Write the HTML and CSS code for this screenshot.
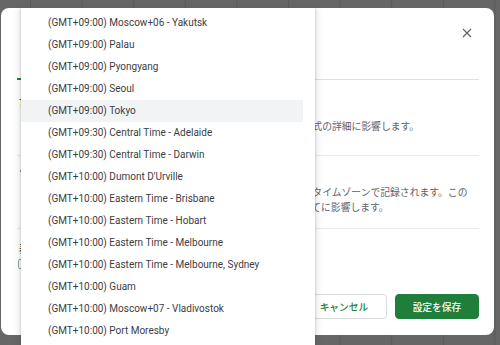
FILE: index.html
```html
<!DOCTYPE html>
<html lang="ja">
  <head>
    <meta charset="UTF-8" />
    <title>スプレッドシートの設定</title>
    <link rel="stylesheet" href="styles.css">
  </head>
  <body>
    <div class="backdrop">
      <div class="dialog">
        <div class="dialog-head">
          <h1 class="dialog-title">このスプレッドシートの設定</h1>
          <button class="close-btn" title="閉じる">
            <svg width="10" height="10" viewBox="0 0 10 10">
              <path d="M1 1 L9 9 M9 1 L1 9" stroke="#5f6368" stroke-width="1.2" fill="none" />
            </svg>
          </button>
        </div>

        <div class="tabs">
          <span class="tab tab-active">全般</span>
          <span class="tab">計算</span>
        </div>

        <div class="section section-locale">
          <div class="label">言語/地域</div>
          <div class="row">
            <div class="select">日本</div>
            <p class="desc">これは、関数、日付、通貨などの表示形式の詳細に影響します。</p>
          </div>
        </div>

        <div class="section section-tz">
          <div class="label">タイムゾーン</div>
          <div class="row">
            <div class="select">(GMT+09:00) Tokyo</div>
            <p class="desc">お使いのスプレッドシートの履歴はこのタイムゾーンで記録されます。この設定は日付と時刻に関連する関数のすべてに影響します。</p>
          </div>
        </div>

        <div class="section-display">
          <div class="label">表示</div>
          <label class="check-row"><span class="checkbox"></span>数式の候補を有効にする</label>
        </div>

        <div class="footer">
          <button class="btn btn-cancel">キャンセル</button>
          <button class="btn btn-save">設定を保存</button>
        </div>

        <ul class="tz-menu">
          <li>(GMT+09:00) Moscow+06 - Yakutsk</li>
          <li>(GMT+09:00) Palau</li>
          <li>(GMT+09:00) Pyongyang</li>
          <li>(GMT+09:00) Seoul</li>
          <li class="is-hover">(GMT+09:00) Tokyo</li>
          <li>(GMT+09:30) Central Time - Adelaide</li>
          <li>(GMT+09:30) Central Time - Darwin</li>
          <li>(GMT+10:00) Dumont D'Urville</li>
          <li>(GMT+10:00) Eastern Time - Brisbane</li>
          <li>(GMT+10:00) Eastern Time - Hobart</li>
          <li>(GMT+10:00) Eastern Time - Melbourne</li>
          <li>(GMT+10:00) Eastern Time - Melbourne, Sydney</li>
          <li>(GMT+10:00) Guam</li>
          <li>(GMT+10:00) Moscow+07 - Vladivostok</li>
          <li>(GMT+10:00) Port Moresby</li>
        </ul>
      </div>
    </div>
  </body>
</html>
```

FILE: styles.css
```css
body {
  margin: 0;
  height: 345px;
  overflow: hidden;
  background-color: #666;
  background-image: linear-gradient(to right, #5a5a5a 1px, transparent 1px);
  background-size: 51.6px 100%;
  background-position: 30px 0;
  font-family: Roboto, "Noto Sans CJK JP", sans-serif;
}

.backdrop {
  padding: 8px 0 0 1px;
}

.dialog {
  position: relative;
  width: 493px;
  height: 327px;
  box-sizing: border-box;
  background-color: white;
  border-radius: 8px;
  padding: 0 15px 16px 16px;
  display: flex;
  flex-direction: column;
}

.dialog-head {
  display: flex;
  align-items: center;
  justify-content: space-between;
  height: 24px;
  margin-top: 13px;
}

.dialog-title {
  margin: 0 0 0 2px;
  font-size: 13.5px;
  font-weight: 400;
  line-height: 18px;
  color: #202124;
}

.close-btn {
  width: 24px;
  height: 24px;
  padding: 0;
  border: 0;
  background: none;
  display: flex;
  align-items: center;
  justify-content: center;
}

.tabs {
  display: flex;
  gap: 16px;
  margin-top: 5px;
  height: 30px;
  box-sizing: border-box;
  border-bottom: 1px solid #e0e0e0;
}

.tab {
  display: flex;
  align-items: center;
  padding: 0 6px;
  margin-bottom: -1px;
  font-size: 10.5px;
  color: #5f6368;
  border-bottom: 2px solid transparent;
}

.tab-active {
  color: #188038;
  border-bottom-color: #188038;
}

.section {
  border-bottom: 1px solid #e8eaed;
}

.section-locale {
  padding: 16px 0 15px;
}

.section-tz {
  padding: 9px 0 13px;
}

.section-display {
  padding-top: 14px;
}

.label {
  font-size: 10.5px;
  line-height: 14px;
  font-weight: 500;
  color: #202124;
  padding-left: 2px;
}

.row {
  display: flex;
  align-items: center;
  gap: 8px;
  margin-top: 2px;
  padding-left: 11px;
}

.section-tz .row {
  margin-top: 6px;
}

.select {
  width: 100px;
  height: 28px;
  box-sizing: border-box;
  border: 1px solid #dadce0;
  border-radius: 4px;
  padding: 0 8px;
  font-size: 10px;
  line-height: 26px;
  color: #3c4043;
  white-space: nowrap;
  overflow: hidden;
  flex-shrink: 0;
}

.desc {
  margin: 0;
  width: 338px;
  font-size: 9.8px;
  line-height: 15px;
  color: #5f6368;
}

.check-row {
  display: flex;
  align-items: center;
  gap: 8px;
  height: 12px;
  margin-top: 1px;
  font-size: 10px;
  color: #3c4043;
}

.checkbox {
  width: 10px;
  height: 10px;
  box-sizing: border-box;
  margin-left: 1px;
  border: 1px solid #9aa0a6;
  border-radius: 2px;
}

.footer {
  margin-top: auto;
  display: flex;
  justify-content: flex-end;
  gap: 8px;
}

.btn {
  height: 25px;
  padding: 0;
  border-radius: 4px;
  font-family: inherit;
  font-size: 9.75px;
  font-weight: 500;
}

.btn-cancel {
  width: 86px;
  background-color: white;
  border: 1px solid #dadce0;
  color: #188038;
}

.btn-save {
  width: 84px;
  background-color: #1e7e3a;
  border: 1px solid #1e7e3a;
  color: white;
}

.tz-menu {
  position: absolute;
  left: 20px;
  top: 0;
  width: 294px;
  height: 345px;
  margin: 0;
  padding: 4px 0 0;
  list-style: none;
  background-color: white;
  box-shadow: 0 2px 6px 2px rgba(60, 64, 67, 0.15), 0 1px 2px rgba(60, 64, 67, 0.3);
}

.tz-menu li {
  height: 22px;
  line-height: 22px;
  margin-right: 12px;
  padding-left: 27px;
  font-size: 10px;
  color: #3c4043;
  white-space: nowrap;
}

.tz-menu .is-hover {
  background-color: #f1f3f4;
}
```
